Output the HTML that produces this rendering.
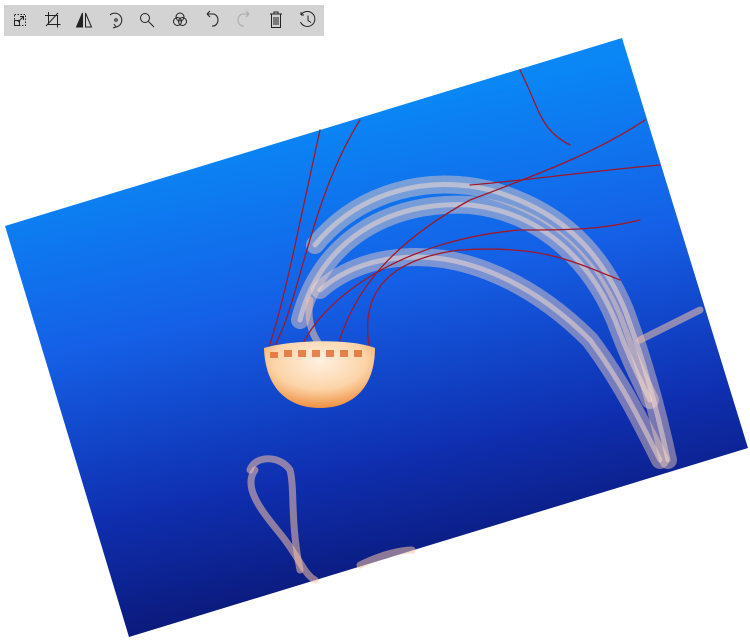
<!DOCTYPE html>
<html><head><meta charset="utf-8"><style>
html,body{margin:0;padding:0;background:#fff;width:750px;height:642px;overflow:hidden}
svg{display:block}
</style></head><body>
<svg width="750" height="642" viewBox="0 0 750 642" xmlns="http://www.w3.org/2000/svg">
<defs>
<linearGradient id="bg" gradientUnits="userSpaceOnUse" x1="330" y1="120" x2="430" y2="600">
<stop offset="0" stop-color="#0a86f5"/>
<stop offset="0.35" stop-color="#1560e6"/>
<stop offset="0.7" stop-color="#0f2fb0"/>
<stop offset="1" stop-color="#0a1570"/>
</linearGradient>
<radialGradient id="bell" cx="0.5" cy="0.3" r="0.7">
<stop offset="0" stop-color="#fff0e0"/>
<stop offset="0.6" stop-color="#fcd4a8"/>
<stop offset="1" stop-color="#f09040"/>
</radialGradient>
</defs>
<polygon points="5,226 622,38 748,448 129,637" fill="url(#bg)"/>
<g fill="none" stroke-linecap="round">
<g stroke="#f7d2bf" stroke-opacity="0.45" stroke-width="18">
<path d="M315,245 C360,190 430,175 490,190 C560,210 600,250 625,310 C640,350 655,400 668,460"/>
<path d="M300,320 C320,240 390,200 470,205 C540,212 590,260 615,320 C630,360 640,380 650,400"/>
<path d="M320,290 C360,255 420,250 470,265 C520,280 560,310 590,340 C620,380 640,420 660,460"/>
</g>
<g stroke="#fbe0d0" stroke-opacity="0.5" stroke-width="5">
<path d="M315,245 C360,190 430,175 490,190 C560,210 600,250 625,310 C640,350 655,400 668,460"/>
<path d="M300,320 C320,240 390,200 470,205 C540,212 590,260 615,320 C630,360 640,380 650,400"/>
<path d="M320,290 C360,255 420,250 470,265 C520,280 560,310 590,340 C620,380 640,420 660,460"/>
</g>
<g stroke="#f5c2a5" stroke-opacity="0.55" stroke-width="7">
<path d="M310,300 C305,330 320,345 325,352"/>
<path d="M640,340 C660,330 680,320 700,310"/>
<path d="M255,470 C240,490 270,520 285,540 C300,560 305,575 315,580"/>
<path d="M250,470 C255,455 280,455 290,470 C295,490 290,520 300,570"/>
<path d="M360,565 C380,555 400,550 412,550"/>
</g>
<g stroke="#a01828" stroke-width="1.3">
<path d="M268,350 C285,300 300,220 320,130"/>
<path d="M275,345 C300,300 310,200 360,120"/>
<path d="M300,350 C320,300 400,240 520,230 C570,230 600,230 640,220"/>
<path d="M335,355 C350,300 380,250 470,200 C550,170 600,150 645,120"/>
<path d="M370,350 C360,300 380,260 460,250 C540,245 570,260 620,280"/>
<path d="M520,70 C540,110 540,130 570,145"/>
<path d="M470,185 C530,180 600,170 660,165"/>
</g>
</g>
<path d="M264,348 C290,340 350,338 375,348 C375,385 355,408 320,408 C285,408 265,385 264,348 Z" fill="url(#bell)"/>
<g fill="#e06a30" opacity="0.8">
<rect x="270" y="352" width="8" height="6"/><rect x="284" y="350" width="8" height="7"/><rect x="298" y="350" width="8" height="7"/><rect x="312" y="350" width="8" height="7"/><rect x="326" y="350" width="8" height="7"/><rect x="340" y="350" width="8" height="7"/><rect x="354" y="350" width="8" height="7"/>
</g>
<rect x="4" y="5" width="320" height="31" fill="#d3d3d3"/>
<g fill="none" stroke="#222" stroke-width="1">
<rect x="14.5" y="14.5" width="11" height="11" stroke-dasharray="1.5,1.5"/>
<rect x="14.5" y="20.5" width="5" height="5"/><path d="M18,22 L23,17 M20,16.5h3.5v3.5"/>
<path d="M48.5,12v12.5h12 M45,15.5h12.5v12 M46,26 L58,13"/>
<path d="M82.5,13v14h-6z" fill="#222"/><path d="M85.5,13v14h6z"/>
<path d="M110,15 A7,7 0 1 1 116,27 M116,27l-2,-3 M116,27l-3,1"/><circle cx="116" cy="20" r="1.3"/>
<circle cx="145" cy="18" r="4.5"/><path d="M148.5,21.5 L154,27"/>
<circle cx="180" cy="17" r="4"/><circle cx="177.5" cy="21.5" r="4"/><circle cx="182.5" cy="21.5" r="4"/>
<path d="M207,14 h6 a5,6 0 0 1 0,12 h-1 M207,14 l3,-3 M207,14 l3,3"/>
<path d="M249,14 h-6 a5,6 0 0 0 0,12 h1 M249,14 l-3,-3 M249,14 l-3,3" stroke="#aaa"/>
<path d="M270,14h12 M274,14v-2h4v2 M271.5,14v13.5h9v-13.5 M274,17v8 M276,17v8 M278,17v8"/>
<path d="M301,15 A7.5,7.5 0 1 1 300.5,22 M301,15 l0,-3 M301,15 l3,0 M308,15.5v5l3,2"/>
</g>
</svg>
</body></html>
